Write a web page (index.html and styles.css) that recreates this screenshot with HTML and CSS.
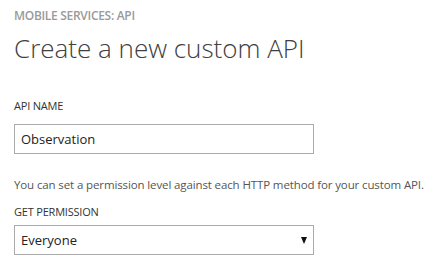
FILE: index.html
```html
<!DOCTYPE html>
<html>
<head>
<meta charset="utf-8">
<link rel="stylesheet" href="styles.css">
</head>
<body>
<div class="page">
  <div class="crumb">MOBILE SERVICES: API</div>
  <h1 class="title">Create a new custom API</h1>
  <label class="label">API NAME</label>
  <div class="field">Observation</div>
  <p class="help">You can set a permission level against each HTTP method for your custom API.</p>
  <label class="label">GET PERMISSION</label>
  <div class="field select">
    <span>Everyone</span>
    <span class="arrow"></span>
  </div>
</div>
</body>
</html>
```
FILE: styles.css
```css
html, body {
  margin: 0;
  padding: 0;
  background: #fff;
}
.page {
  width: 440px;
  height: 260px;
  box-sizing: border-box;
  padding: 9px 0 0 14px;
  font-family: "Open Sans", "Noto Sans", sans-serif;
  color: #333;
  display: flex;
  flex-direction: column;
  align-items: flex-start;
}
.crumb {
  font-size: 12px;
  font-weight: 600;
  color: #9a9a9a;
  line-height: 14px;
  letter-spacing: -0.3px;
}
.title {
  margin: 8px 0 0 0;
  font-size: 26px;
  font-weight: 300;
  line-height: 34px;
  color: #404040;
}
.label {
  margin-top: 34px;
  font-size: 11px;
  line-height: 14px;
  color: #333;
  letter-spacing: -0.2px;
}
.field {
  box-sizing: border-box;
  width: 300px;
  height: 30px;
  margin-top: 11px;
  border: 1px solid #ababab;
  padding: 0 0 0 6px;
  font-size: 13px;
  line-height: 28px;
  color: #222;
}
.help {
  margin: 23px 0 0 0;
  font-size: 11.5px;
  line-height: 16px;
  color: #555;
  letter-spacing: -0.12px;
  white-space: nowrap;
}
.help + .label {
  margin-top: 12px;
}
.select {
  margin-top: 6px;
  display: flex;
  align-items: center;
  justify-content: space-between;
  padding-right: 6px;
}
.arrow {
  width: 0;
  height: 0;
  border-left: 3.5px solid transparent;
  border-right: 3.5px solid transparent;
  border-top: 7px solid #111;
}
```
